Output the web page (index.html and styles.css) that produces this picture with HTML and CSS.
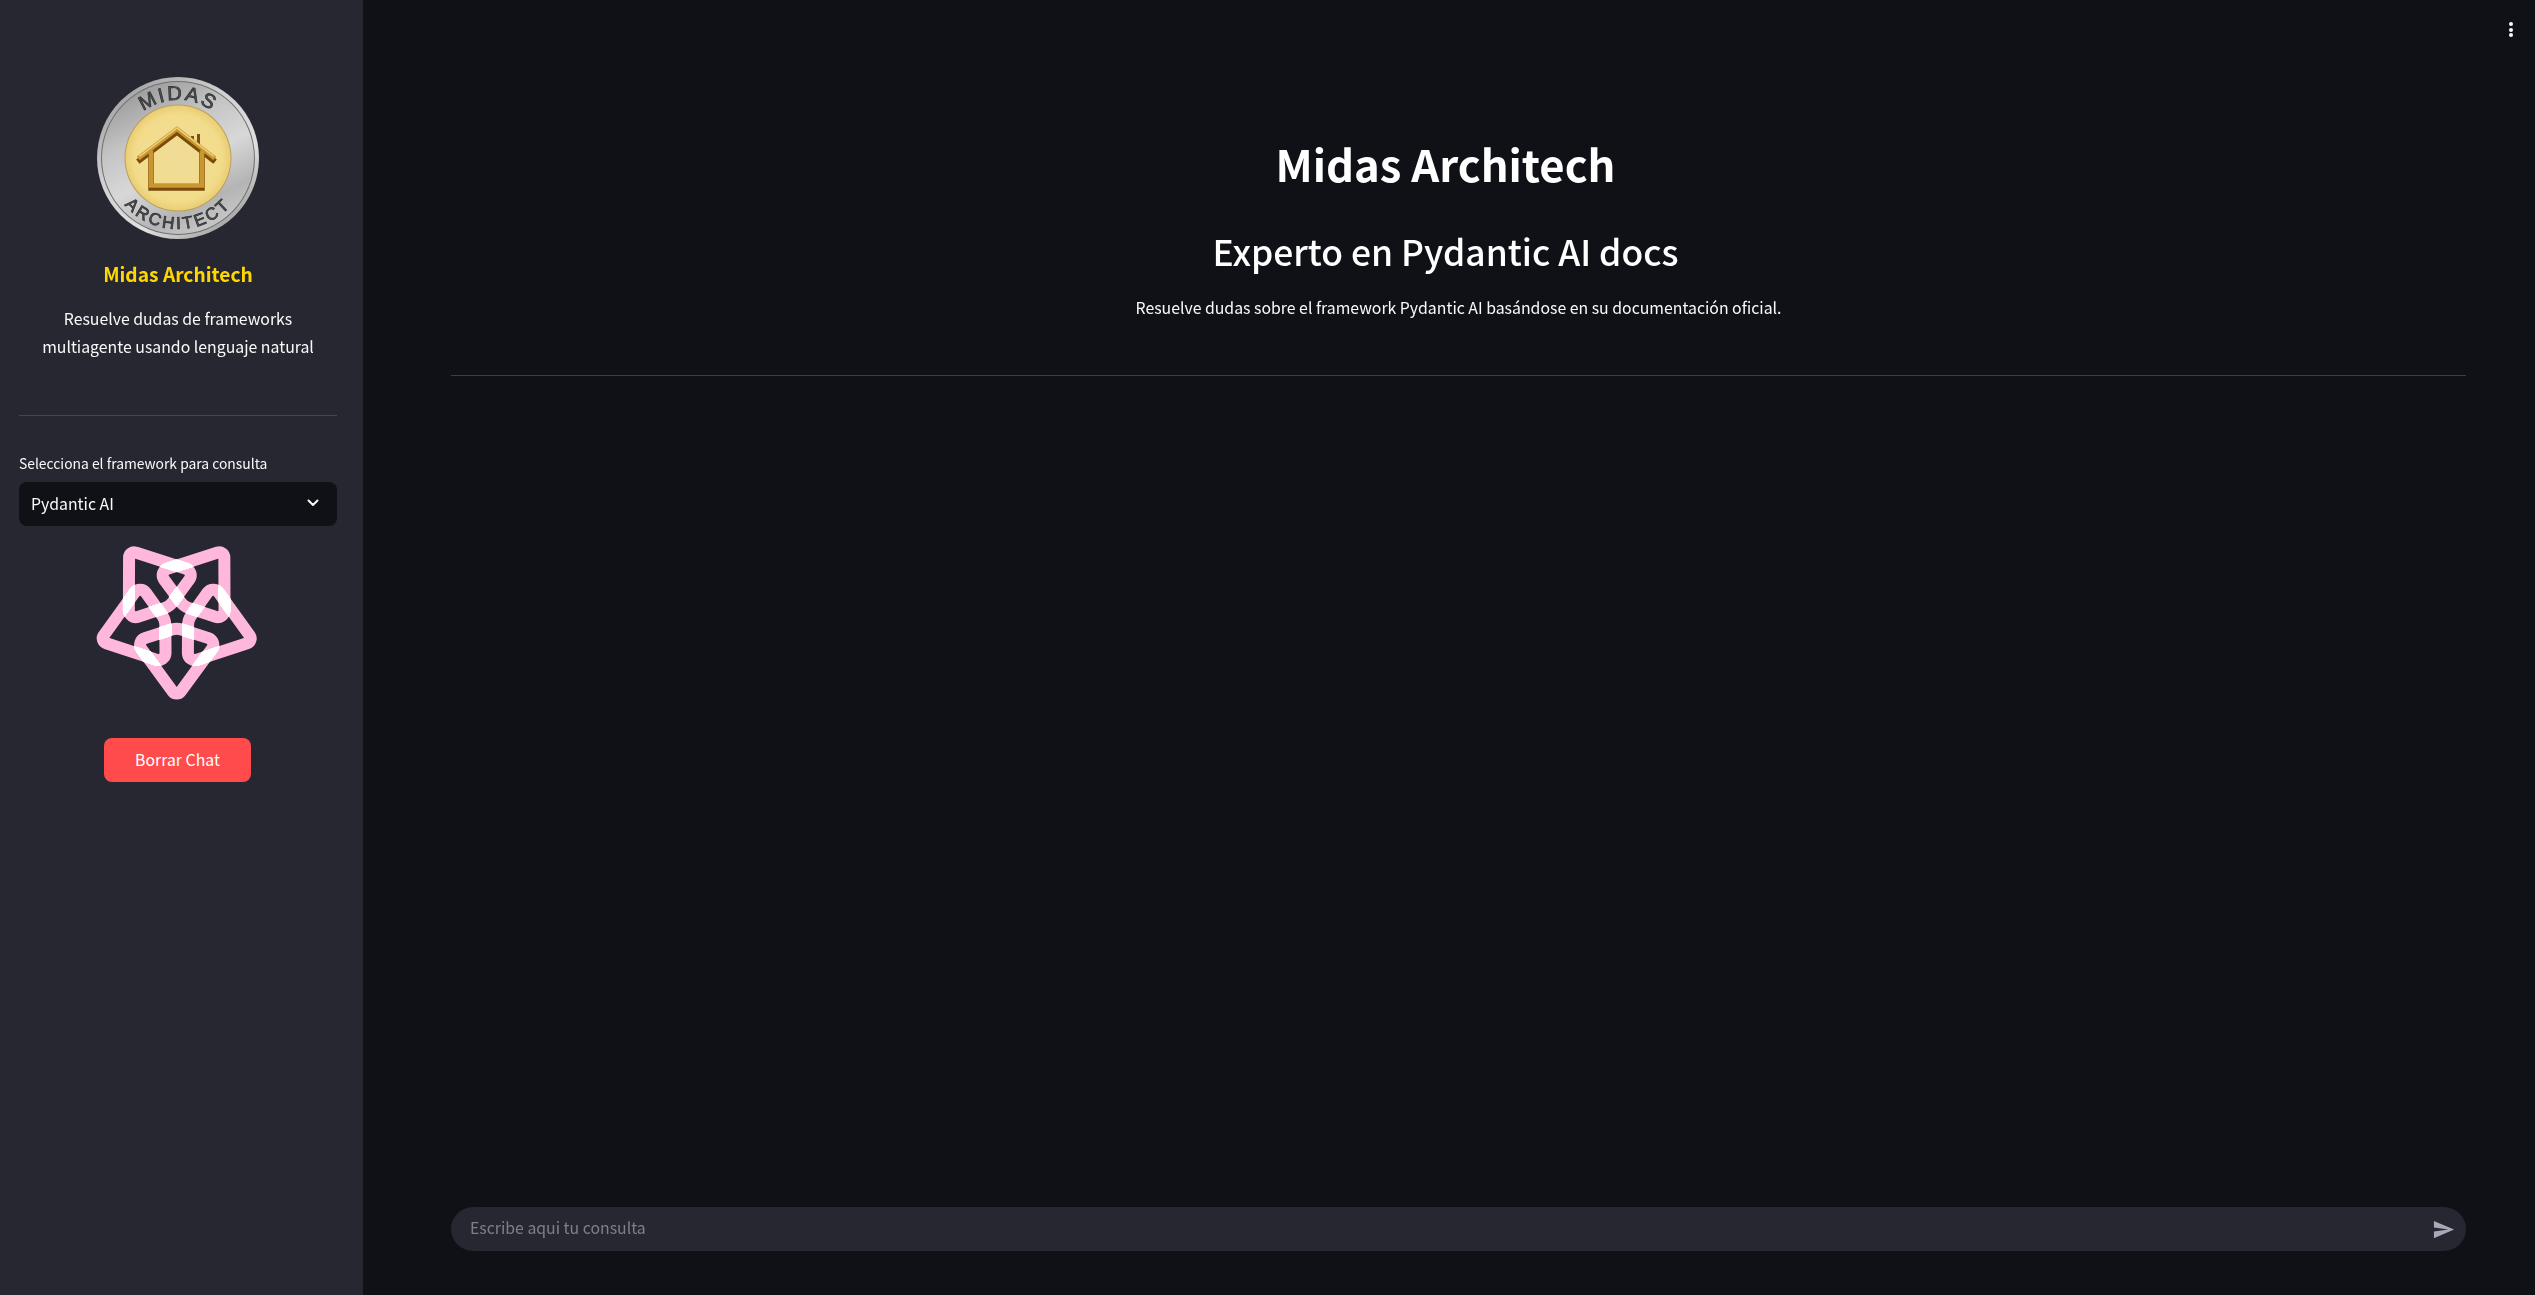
FILE: index.html
```html
<!DOCTYPE html>
<html lang="es">
<head>
<meta charset="utf-8">
<title>Midas Architech</title>
<link rel="stylesheet" href="styles.css">
</head>
<body>
<div class="app">
  <aside class="sidebar">
    <svg class="coin" viewBox="0 0 164 164" width="164" height="164" aria-label="Midas Architect">
      <defs>
        <linearGradient id="silver" x1="0.15" y1="0.05" x2="0.85" y2="0.95">
          <stop offset="0" stop-color="#a0a0a0"/>
          <stop offset="0.35" stop-color="#d0d0d0"/>
          <stop offset="0.7" stop-color="#e0e0e0"/>
          <stop offset="1" stop-color="#9c9c9c"/>
        </linearGradient>
        <linearGradient id="band" x1="0.25" y1="0" x2="0.75" y2="1">
          <stop offset="0" stop-color="#989898"/>
          <stop offset="0.3" stop-color="#c4c4c4"/>
          <stop offset="0.55" stop-color="#d8d8d8"/>
          <stop offset="0.8" stop-color="#b4b4b4"/>
          <stop offset="1" stop-color="#cccccc"/>
        </linearGradient>
        <radialGradient id="gold" cx="0.5" cy="0.5" r="0.55">
          <stop offset="0" stop-color="#f1dc98"/>
          <stop offset="0.75" stop-color="#f2dc8c"/>
          <stop offset="1" stop-color="#e6c566"/>
        </radialGradient>
        <path id="arcTop" d="M 24 82 A 58 58 0 0 1 140 82"/>
        <path id="arcBottom" d="M 11 82 A 71 71 0 0 0 153 82"/>
      </defs>
      <circle cx="82" cy="82" r="81" fill="url(#silver)"/>
      <circle cx="82" cy="82" r="77" fill="#6e6f71"/>
      <circle cx="82" cy="82" r="76" fill="url(#band)"/>
      <circle cx="82" cy="82" r="53.5" fill="#b9a05e"/>
      <circle cx="82" cy="82" r="52.5" fill="url(#gold)"/>
      <text class="coin-text"><textPath href="#arcTop" startOffset="50%" text-anchor="middle">MIDAS</textPath></text>
      <text class="coin-text coin-text-small"><textPath href="#arcBottom" startOffset="50%" text-anchor="middle">ARCHITECT</textPath></text>
      <path class="house-chimney" d="M96.5 60 V66 M102.5 58 V72"/>
      <path class="house-shadow" d="M44 84 L81 56 L117 84 M55 79 V112 H106 V79"/>
      <path class="house-main" d="M44 81 L81 53 L117 81 M55 77 V109.5 H106 V77"/>
      <path class="house-light" d="M44 80 L81 52 L117 80"/>
    </svg>
    <h3 class="brand">Midas Architech</h3>
    <p class="tagline">Resuelve dudas de frameworks<br>multiagente usando lenguaje natural</p>
    <hr class="side-rule">
    <label class="field-label">Selecciona el framework para consulta</label>
    <div class="select">
      <span>Pydantic AI</span>
      <svg class="chevron" viewBox="0 0 12 8" width="12" height="8"><path d="M1.5 1.5 L6 6 L10.5 1.5"/></svg>
    </div>
    <svg class="knot" viewBox="0 0 164 153" width="164" height="153" aria-label="Pydantic AI">
      <defs>
        <path id="dart" d="M4.08 -75.43 L35.33 -32.75 A7 7 0 0 1 31.85 -22.1 L4.77 -13.51 Q0 -12 -4.77 -13.51 L-31.85 -22.1 A7 7 0 0 1 -35.33 -32.75 L-4.08 -75.43 A5 5 0 0 1 4.08 -75.43 Z"/>
      </defs>
      <g class="knot-group" transform="translate(80.7 69)">
        <use class="knot-strand" href="#dart" transform="rotate(36)"/>
        <use class="knot-strand" href="#dart" transform="rotate(108)"/>
        <use class="knot-strand" href="#dart" transform="rotate(180)"/>
        <use class="knot-strand" href="#dart" transform="rotate(252)"/>
        <use class="knot-strand" href="#dart" transform="rotate(324)"/>
      </g>
    </svg>
    <button class="clear-btn" type="button">Borrar Chat</button>
  </aside>
  <main class="main">
    <div class="kebab"><i></i><i></i><i></i></div>
    <h1 class="title">Midas Architech</h1>
    <h2 class="subtitle">Experto en Pydantic AI docs</h2>
    <p class="intro">Resuelve dudas sobre el framework Pydantic AI basándose en su documentación oficial.</p>
    <hr class="main-rule">
    <div class="chat-input">
      <span class="placeholder">Escribe aqui tu consulta</span>
      <svg class="send" viewBox="0 0 24 24" width="23" height="23"><path d="M2.01 21 23 12 2.01 3 2 10l15 2-15 2z"/></svg>
    </div>
  </main>
</div>
</body>
</html>
```

FILE: styles.css
```css
* { box-sizing: border-box; }
html, body { margin: 0; height: 100%; }
body {
  background: #0f1117;
  color: #fafafa;
  font-family: "Noto Sans CJK SC", "Noto Sans", sans-serif;
  overflow: hidden;
}
.app { display: flex; height: 100vh; }

.sidebar {
  width: 363px;
  flex: none;
  background: #262730;
  padding: 76px 26px 0 19px;
  display: flex;
  flex-direction: column;
  align-items: center;
}
.coin { display: block; flex: none; }
.coin-text {
  font-family: "Liberation Sans", sans-serif;
  font-size: 20px;
  letter-spacing: 2.2px;
  fill: #4e5154;
  stroke: #2a2c2f;
  stroke-width: 0.7;
}
.coin-text-small { font-size: 17px; letter-spacing: 2.6px; }
.house-shadow { fill: none; stroke: #7a4b08; stroke-width: 5.5; stroke-linejoin: miter; stroke-linecap: square; }
.house-main { fill: none; stroke: #c9962f; stroke-width: 4.5; stroke-linejoin: miter; stroke-linecap: square; }
.house-light { fill: none; stroke: #efd27a; stroke-width: 1.5; stroke-linecap: square; }
.house-chimney { fill: none; stroke: #7c5210; stroke-width: 3; }

.brand {
  margin: 19px 0 0;
  font-size: 19.2px;
  line-height: 30px;
  font-weight: 600;
  color: #ffd700;
  text-align: center;
}
.tagline {
  margin: 16px 0 0;
  font-size: 15.84px;
  line-height: 28px;
  text-align: center;
}
.side-rule {
  width: 100%;
  margin: 54px 0 0;
  border: 0;
  border-top: 1px solid #45464f;
}
.field-label {
  align-self: stretch;
  margin-top: 36px;
  font-size: 13.86px;
  line-height: 22px;
}
.select {
  align-self: stretch;
  margin-top: 8px;
  height: 44px;
  flex: none;
  background: #0f1117;
  border-radius: 8px;
  padding: 0 18px 2px 12px;
  display: flex;
  align-items: center;
  justify-content: space-between;
  font-size: 15.84px;
}
.chevron path { fill: none; stroke: #fafafa; stroke-width: 2; stroke-linecap: round; stroke-linejoin: round; }
.knot { display: block; flex: none; margin-top: 21px; overflow: visible; }
.knot-group { isolation: isolate; }
.knot-strand { fill: none; stroke: #ffb7dc; stroke-width: 12; mix-blend-mode: plus-lighter; }
.clear-btn {
  margin: 38px 1px 0 0;
  width: 147px;
  height: 44px;
  flex: none;
  border: 0;
  border-radius: 8px;
  background: #ff4b4b;
  color: #fff;
  font: inherit;
  font-size: 15.84px;
  padding: 0 0 2px;
}

.main {
  flex: 1;
  position: relative;
  padding: 133px 69px 44px 88px;
  display: flex;
  flex-direction: column;
  min-width: 0;
}
.kebab {
  position: absolute;
  top: 22px;
  right: 22px;
  display: flex;
  flex-direction: column;
  gap: 1.5px;
}
.kebab i { display: block; width: 4px; height: 4px; border-radius: 50%; background: #fafafa; }
.title {
  margin: 0;
  padding-right: 26px;
  font-size: 43.6px;
  line-height: 60px;
  font-weight: 700;
  text-align: center;
  color: #fff;
}
.subtitle {
  margin: 33px 0 0;
  padding-right: 26px;
  font-size: 35.4px;
  line-height: 50px;
  font-weight: 500;
  text-align: center;
  color: #fff;
}
.intro {
  margin: 18px 0 0;
  font-size: 15.84px;
  line-height: 28px;
  text-align: center;
}
.main-rule {
  width: 100%;
  margin: 53px 0 0;
  border: 0;
  border-top: 1px solid #3d3e45;
}
.chat-input {
  margin-top: auto;
  height: 44px;
  flex: none;
  background: #262730;
  border-radius: 22px;
  padding: 0 11px 0 19px;
  display: flex;
  align-items: center;
  justify-content: space-between;
}
.placeholder { font-size: 15.84px; line-height: 22px; padding-bottom: 2px; color: #7f8087; }
.send path { fill: #a6a9b8; }
```
